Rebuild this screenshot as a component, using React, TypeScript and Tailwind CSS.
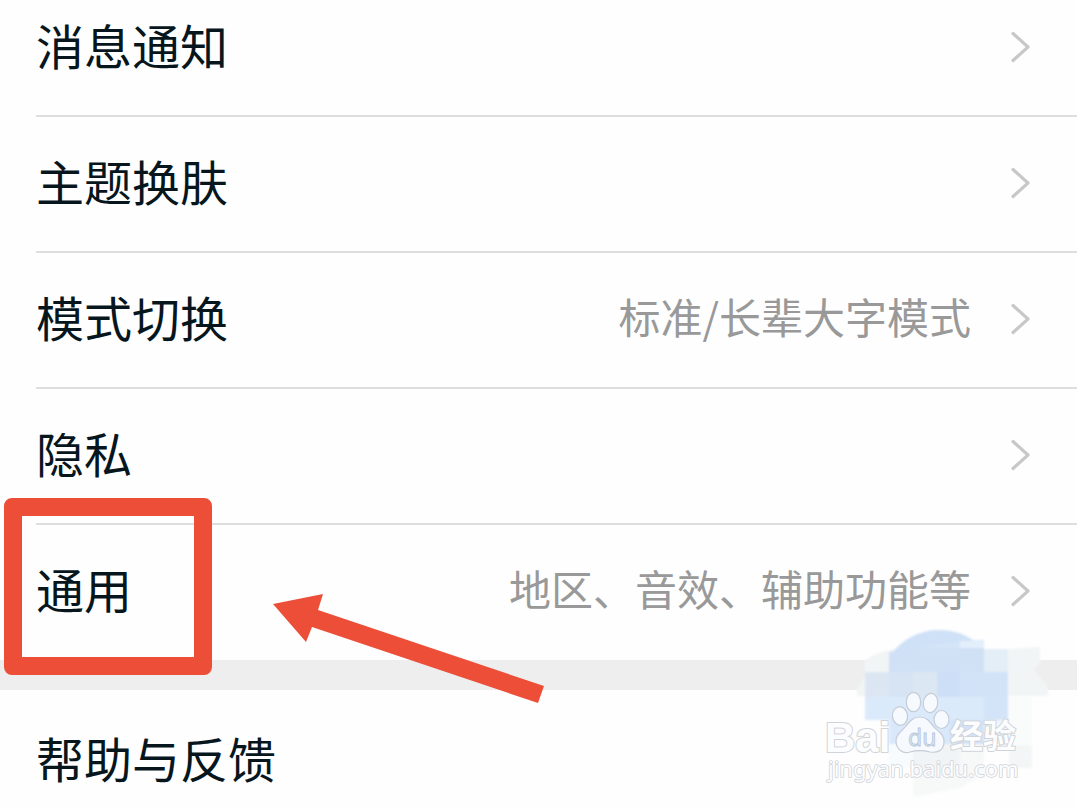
type Setting = { label: string; value?: string; highlighted?: boolean };

const settings: Setting[] = [
  { label: "消息通知" },
  { label: "主题换肤" },
  { label: "模式切换", value: "标准/长辈大字模式" },
  { label: "隐私" },
  { label: "通用", value: "地区、音效、辅助功能等", highlighted: true },
];

function Chevron() {
  return (
    <svg className="h-8 w-5 shrink-0" viewBox="0 0 20 32" fill="none" aria-hidden="true">
      <path d="M2 2.5 17 16 2 29.5" stroke="#c8c8c8" strokeWidth="3.2" strokeLinecap="round" strokeLinejoin="round" />
    </svg>
  );
}

function Pointer() {
  return (
    <svg
      className="pointer-events-none absolute top-[67px] left-[272px] z-10 h-28 w-[274px]"
      viewBox="272 592 274 112"
      aria-hidden="true"
    >
      <path d="M273 604 323 594 318 610 544 686 538 703 312 627 306 642Z" fill="#ec4e38" />
    </svg>
  );
}

function SettingRow({ label, value, highlighted }: Setting) {
  return (
    <li className="relative">
      <button type="button" className="block w-full pl-9 text-left">
        <span
          className={
            highlighted
              ? "flex items-center border-b border-transparent pt-[31px] pr-[46px] pb-[33px]"
              : "flex items-center border-b-2 border-[#dedede] pt-[31px] pr-[46px] pb-[33px]"
          }
        >
          <span className="flex-1 pb-1.5 text-[48px] leading-[64px] text-[#07161d]">{label}</span>
          {value && <span className="mr-10 pb-1.5 text-[42px] leading-[64px] text-[#999999]">{value}</span>}
          <Chevron />
        </span>
      </button>
      {highlighted && (
        <>
          <span className="pointer-events-none absolute -top-[27px] left-1 z-10 h-[177px] w-[208px] rounded-lg border-[18px] border-[#ec4e38]" />
          <Pointer />
        </>
      )}
    </li>
  );
}

function Watermark() {
  return (
    <svg
      className="pointer-events-none h-[197px] w-[277px]"
      viewBox="0 0 277 197"
      role="img"
      aria-label="Baidu 经验"
    >
      <defs>
        <filter id="soft" x="-10%" y="-10%" width="120%" height="120%">
          <feGaussianBlur stdDeviation="1" />
        </filter>
      </defs>
      <g filter="url(#soft)">
        <path d="M65 50 78 43 94 39H208L240 37V53L234 60 248 77V86H57V80L65 66Z" fill="#f2f5f5" />
        <path d="M90 46C112 14 154 14 177 33V64H90Z" fill="#cfe1f7" />
        <path d="M100 41 160 31 184 30V62H100Z" fill="#d4e5f8" />
        <path d="M160 31H184V39H160Z" fill="#e3effb" />
        <path d="M89 42 120 38H184V63H89Z" fill="#d0e0f5" />
        <path d="M184 39H208V62H184Z" fill="#e4eef6" />
        <path d="M65 62H137V87H65Z" fill="#d6e4f4" />
        <path d="M65 62H89V87H65Z" fill="#dce6f3" />
        <path d="M113 62H137V87H113Z" fill="#dbe7f3" />
        <path d="M137 62H208V87H137Z" fill="#cddff6" />
        <path d="M160 62H208V87H160Z" fill="#d2e3f8" />
        <path d="M65 87H208V110H65Z" fill="#dbeafb" />
        <path d="M184 87H208V110H184Z" fill="#d3e4f8" />
        <path d="M89 110H184V134H89Z" fill="#d9e8fa" />
        <path d="M150 110H184V134H150Z" fill="#d0e3fa" />
        <path d="M184 110H208V134H184Z" fill="#f0f6fc" />
        <path d="M208 87H232V134H208Z" fill="#fafbfb" />
        <path d="M89 134H113V158H89Z" fill="#f7fbfd" />
        <path d="M113 134H184V164L160 178 113 187Z" fill="#f7f8f8" />
        <path d="M113 134H160V158H113Z" fill="#f1f4f6" />
        <path d="M209 135H232V158H209Z" fill="#f4f5f6" />
      </g>
      <g fill="#f6faff" stroke="#c6ccd5" strokeWidth="1.2">
        <ellipse cx="100" cy="106" rx="7.5" ry="9.3" transform="rotate(-8 100 106)" />
        <ellipse cx="113.5" cy="92" rx="7.2" ry="9.7" />
        <ellipse cx="130.5" cy="93" rx="7.2" ry="9.7" transform="rotate(8 130.5 93)" />
        <ellipse cx="141.5" cy="109.5" rx="7.5" ry="9" />
        <path d="M120 107C127 107 130 112 134 117C139 122 145 125 144 133C143 141 137 143 130 142C123 140 117 140 110 142C103 144 97 140 96 132C95 125 102 121 106 116C110 111 113 107 120 107Z" />
      </g>
      <g fill="#fcfdfe" stroke="#d0d3d8" strokeLinejoin="round" strokeWidth="2" paintOrder="stroke">
        <text x="25" y="142" fontSize="42" fontWeight="700" className="font-['Liberation_Sans',sans-serif]">
          Bai
        </text>
        <text x="150" y="138" fontSize="33" fontWeight="700" className="font-['Noto_Sans_CJK_SC',sans-serif]">
          经验
        </text>
        <text x="28" y="167" fontSize="22" strokeWidth="1.6" className="font-['Noto_Sans',sans-serif]">
          jingyan.baidu.com
        </text>
      </g>
      <text
        x="108"
        y="136"
        fontSize="23"
        fill="#d8e6f6"
        stroke="#b9c6d6"
        strokeWidth="0.8"
        className="font-['Noto_Sans',sans-serif]"
      >
        du
      </text>
    </svg>
  );
}

export default function App() {
  return (
    <main className="overflow-hidden bg-[#fefefe] font-['Noto_Sans_CJK_SC',sans-serif]">
      <ul className="-mt-[19px]">
        {settings.map((item) => (
          <SettingRow key={item.label} {...item} />
        ))}
      </ul>
      <section className="relative border-t-[30px] border-[#eeeeee]">
        <button
          type="button"
          className="block w-full pt-8 pr-12 pb-[15px] pl-9 text-left text-[48px] leading-[70px] text-[#07161d]"
        >
          帮助与反馈
        </button>
        <div className="absolute right-0 bottom-0">
          <Watermark />
        </div>
      </section>
    </main>
  );
}
